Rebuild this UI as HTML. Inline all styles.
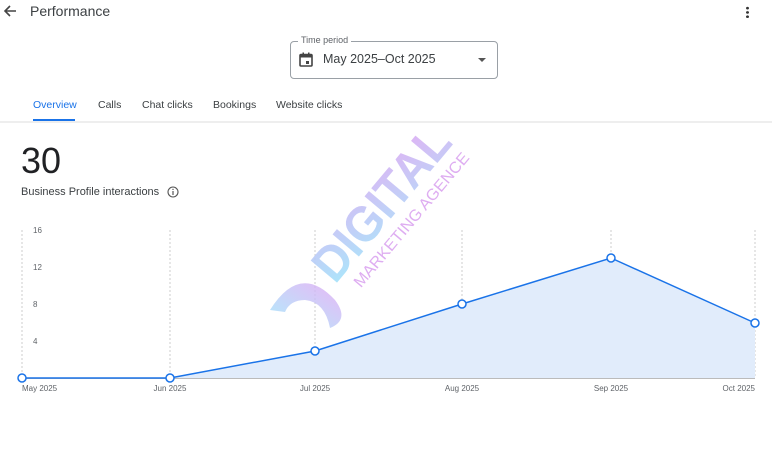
<!DOCTYPE html>
<html><head><meta charset="utf-8"><style>
body{margin:0;width:772px;height:462px;background:#fff;font-family:"Liberation Sans",sans-serif;overflow:hidden;position:relative;color:#3c4043}
.a{position:absolute;white-space:nowrap}
</style></head><body>
<svg class="a" style="left:2px;top:3px" width="16" height="16" viewBox="0 0 16 16"><path d="M14 8H3M8 3L3 8l5 5" stroke="#444" stroke-width="1.6" fill="none"/></svg>
<div class="a" style="left:30px;top:3px;font-size:14px;color:#3c4043">Performance</div>
<div class="a" style="left:746px;top:6px;width:3px;height:12px;background:radial-gradient(circle,#333 1.3px,transparent 1.5px) 0 0/3px 4.3px"></div>
<div class="a" style="left:290px;top:41px;width:206px;height:36px;border:1px solid #9aa0a6;border-radius:4px"></div>
<div class="a" style="left:298px;top:35px;background:#fff;padding:0 3px;font-size:9px;color:#5f6368">Time period</div>
<svg class="a" style="left:299px;top:52px" width="14" height="15" viewBox="0 0 14 15"><rect x="1" y="2.5" width="12" height="11.5" rx="1" fill="none" stroke="#444" stroke-width="1.6"/><rect x="1" y="2.5" width="12" height="3" fill="#444"/><rect x="3.5" y="0.5" width="1.5" height="3" fill="#444"/><rect x="9" y="0.5" width="1.5" height="3" fill="#444"/><rect x="7" y="9" width="3" height="3" fill="#444"/></svg>
<div class="a" style="left:323px;top:52px;font-size:12.5px;color:#3c4043">May 2025–Oct 2025</div>
<div class="a" style="left:478px;top:58px;border:4px solid transparent;border-top:4px solid #555;border-bottom:0"></div>
<div class="a" style="left:33px;top:99px;font-size:10.5px;color:#1a73e8">Overview</div>
<div class="a" style="left:33px;top:119px;width:42px;height:2px;background:#1a73e8"></div>
<div class="a" style="left:98px;top:99px;font-size:10.5px">Calls</div>
<div class="a" style="left:142px;top:99px;font-size:10.5px">Chat clicks</div>
<div class="a" style="left:213px;top:99px;font-size:10.5px">Bookings</div>
<div class="a" style="left:276px;top:99px;font-size:10.5px">Website clicks</div>
<div class="a" style="left:0;top:121px;width:772px;height:2px;background:#eee"></div>
<div class="a" style="left:21px;top:140px;font-size:36px;color:#202124">30</div>
<div class="a" style="left:21px;top:186px;font-size:11px;color:#3c4043">Business Profile interactions</div>
<svg class="a" style="left:167px;top:186px" width="12" height="12" viewBox="0 0 12 12"><circle cx="6" cy="6" r="5" fill="none" stroke="#555" stroke-width="1.1"/><rect x="5.4" y="5" width="1.2" height="4" fill="#555"/><rect x="5.4" y="2.8" width="1.2" height="1.2" fill="#555"/></svg>
<svg class="a" style="left:0;top:0" width="772" height="462">
<g stroke="#ccc" stroke-dasharray="2,2" stroke-width="1">
<line x1="22" y1="230" x2="22" y2="378"/><line x1="170" y1="230" x2="170" y2="378"/><line x1="315" y1="230" x2="315" y2="378"/><line x1="462" y1="230" x2="462" y2="378"/><line x1="611" y1="230" x2="611" y2="378"/><line x1="755" y1="230" x2="755" y2="378"/></g>
<g font-size="8" fill="#5f6368" font-family="Liberation Sans"><text x="33" y="233">16</text><text x="33" y="270">12</text><text x="33" y="307">8</text><text x="33" y="344">4</text>
<text x="22" y="391" text-anchor="start">May 2025</text><text x="170" y="391" text-anchor="middle">Jun 2025</text><text x="315" y="391" text-anchor="middle">Jul 2025</text><text x="462" y="391" text-anchor="middle">Aug 2025</text><text x="611" y="391" text-anchor="middle">Sep 2025</text><text x="755" y="391" text-anchor="end">Oct 2025</text></g>
<path d="M22 378L170 378L315 351L462 304L611 258L755 323L755 378Z" fill="#e1ecfb"/>
<line x1="22" y1="378.5" x2="755" y2="378.5" stroke="#bbb"/>
<path d="M22 378L170 378L315 351L462 304L611 258L755 323" fill="none" stroke="#1a73e8" stroke-width="1.5"/>
<g fill="#fff" stroke="#1a73e8" stroke-width="1.5"><circle cx="22" cy="378" r="4"/><circle cx="170" cy="378" r="4"/><circle cx="315" cy="351" r="4"/><circle cx="462" cy="304" r="4"/><circle cx="611" cy="258" r="4"/><circle cx="755" cy="323" r="4"/></g>
<defs><linearGradient id="g" x1="0" y1="1" x2="1" y2="0"><stop offset="0" stop-color="#9de8fb"/><stop offset="1" stop-color="#e2a6f3"/></linearGradient></defs>
<g transform="translate(335,285) rotate(-50)" opacity="0.9">
<text x="0" y="0" font-size="50" font-weight="bold" fill="url(#g)" font-family="Liberation Sans" textLength="185" lengthAdjust="spacingAndGlyphs">DIGITAL</text>
<text x="14" y="22" font-size="16" fill="#dba5f0" font-family="Liberation Sans" textLength="170" lengthAdjust="spacingAndGlyphs">MARKETING AGENCE</text></g>
<path d="M270 310 Q300 262 335 300 Q350 320 330 328 Q325 302 305 300 Q290 300 285 312Z" fill="url(#g)" opacity="0.8"/>
</svg>
</body></html>
